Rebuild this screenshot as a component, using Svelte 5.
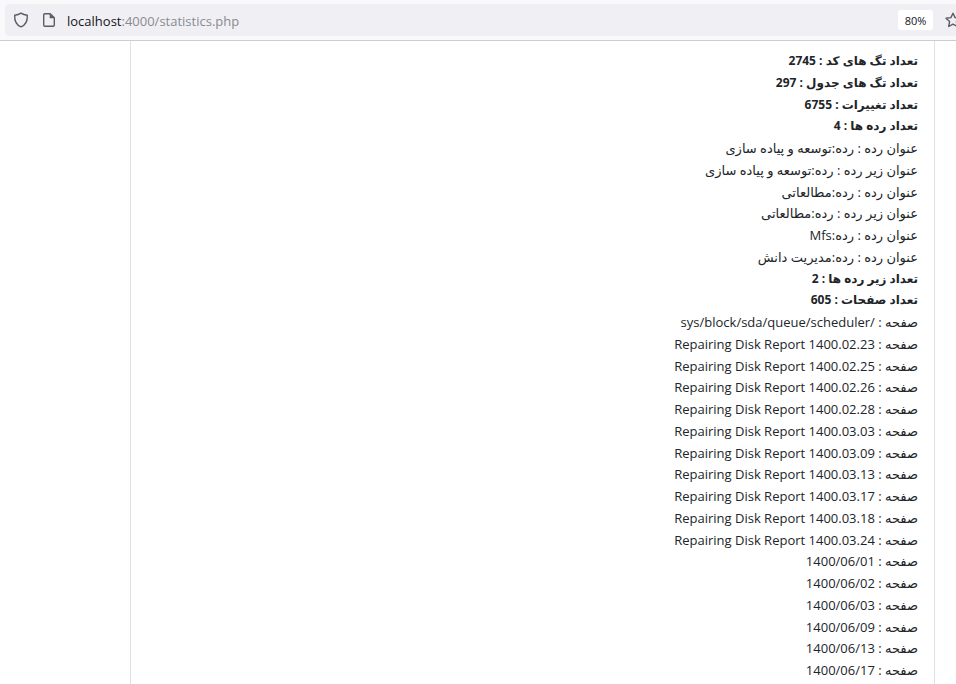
<script lang="ts">
  type Row = { label: string; value: string; total?: boolean }

  const reportDates = [
    '1400.02.23', '1400.02.25', '1400.02.26', '1400.02.28', '1400.03.03',
    '1400.03.09', '1400.03.13', '1400.03.17', '1400.03.18', '1400.03.24'
  ]
  const dayPages = ['1400/06/01', '1400/06/02', '1400/06/03', '1400/06/09', '1400/06/13', '1400/06/17']

  const pages = [
    '/sys/block/sda/queue/scheduler',
    ...reportDates.map((date) => `Repairing Disk Report ${date}`),
    ...dayPages
  ]

  const rows: Row[] = [
    { label: 'تعداد تگ های کد', value: '2745', total: true },
    { label: 'تعداد تگ های جدول', value: '297', total: true },
    { label: 'تعداد تغییرات', value: '6755', total: true },
    { label: 'تعداد رده ها', value: '4', total: true },
    { label: 'عنوان رده', value: 'رده:توسعه و پیاده سازی' },
    { label: 'عنوان زیر رده', value: 'رده:توسعه و پیاده سازی' },
    { label: 'عنوان رده', value: 'رده:مطالعاتی' },
    { label: 'عنوان زیر رده', value: 'رده:مطالعاتی' },
    { label: 'عنوان رده', value: 'رده:Mfs' },
    { label: 'عنوان رده', value: 'رده:مدیریت دانش' },
    { label: 'تعداد زیر رده ها', value: '2', total: true },
    { label: 'تعداد صفحات', value: '605', total: true },
    ...pages.map((page) => ({ label: 'صفحه', value: page }))
  ]
</script>

<div class="browser">
  <header class="toolbar">
    <div class="address-bar">
      <button class="icon" aria-label="Tracking protection">
        <svg width="16" height="16" viewBox="0 0 16 16">
          <path d="M8 1.1C6.3 2.2 4.2 2.9 1.7 3.2C1.4 8.8 3.5 13 8 14.9C12.5 13 14.6 8.8 14.3 3.2C11.8 2.9 9.7 2.2 8 1.1Z" />
        </svg>
      </button>
      <button class="icon" aria-label="Site information">
        <svg width="16" height="16" viewBox="0 0 16 16">
          <path d="M3.9 1.7H9.2L13.3 5.8V13.1Q13.3 14.3 12.1 14.3H3.9Q2.7 14.3 2.7 13.1V2.9Q2.7 1.7 3.9 1.7Z" />
          <path class="fold" d="M8.7 1.5V6.3H13.5Z" />
        </svg>
      </button>
      <a class="url" href="/statistics.php"><span class="host">localhost</span>:4000/statistics.php</a>
      <button class="zoom">80%</button>
      <button class="icon star" aria-label="Bookmark this page">
        <svg width="16" height="16" viewBox="0 0 16 16">
          <path d="M8 1.2L10.1 5.6L15 6.2L11.4 9.6L12.3 14.5L8 12.1L3.7 14.5L4.6 9.6L1 6.2L5.9 5.6Z" />
        </svg>
      </button>
    </div>
  </header>

  <main class="page" dir="rtl" lang="fa">
    <ul class="stats">
      {#each rows as row}
        <li class:total={row.total}>{row.label} : {row.value}</li>
      {/each}
    </ul>
  </main>
</div>

<style>
  :global(body) {
    margin: 0;
    background: #fff;
    overflow: hidden;
  }

  .browser {
    display: flex;
    flex-direction: column;
    min-height: 100vh;
    font-family: "Open Sans", "DejaVu Sans", sans-serif;
  }

  .toolbar {
    padding: 4px 0 4px 5px;
    background: #f9f9fb;
    border-bottom: 1px solid #ccc;
  }

  .address-bar {
    display: flex;
    align-items: center;
    height: 32px;
    padding-left: 8px;
    background: #f0f0f4;
    border-radius: 4px 0 0 4px;
    overflow: hidden;
  }

  button {
    flex: none;
    padding: 0;
    border: 0;
    background: none;
    font: inherit;
  }

  .icon {
    width: 16px;
    height: 16px;
    margin-right: 12px;
  }

  .icon svg {
    display: block;
    fill: none;
    stroke: #5b5b66;
    stroke-width: 1.4;
    stroke-linejoin: round;
  }

  .icon .fold {
    fill: #5b5b66;
    stroke: none;
  }

  .url {
    flex: 1;
    margin-left: -2px;
    padding-top: 2px;
    color: #8a8a90;
    font-size: 13px;
    text-decoration: none;
  }

  .host {
    color: #15141a;
  }

  .zoom {
    width: 35px;
    height: 20px;
    margin-right: 12px;
    padding-top: 1px;
    background: #fff;
    border-radius: 3px;
    color: #15141a;
    font-size: 11px;
    line-height: 20px;
  }

  .star {
    margin-right: -5px;
  }

  .page {
    display: flex;
    flex: 1;
    margin: 0 21px 0 130px;
    padding: 10px 16px 4px;
    border: solid #dee2e6;
    border-width: 0 1px;
  }

  .stats {
    display: flex;
    flex: 1;
    flex-direction: column;
    justify-content: space-between;
    margin: 0;
    padding: 0;
    list-style: none;
    color: #212529;
    font-size: 13px;
    line-height: 20px;
  }

  .total {
    font-size: 12px;
    font-weight: bold;
  }
</style>
